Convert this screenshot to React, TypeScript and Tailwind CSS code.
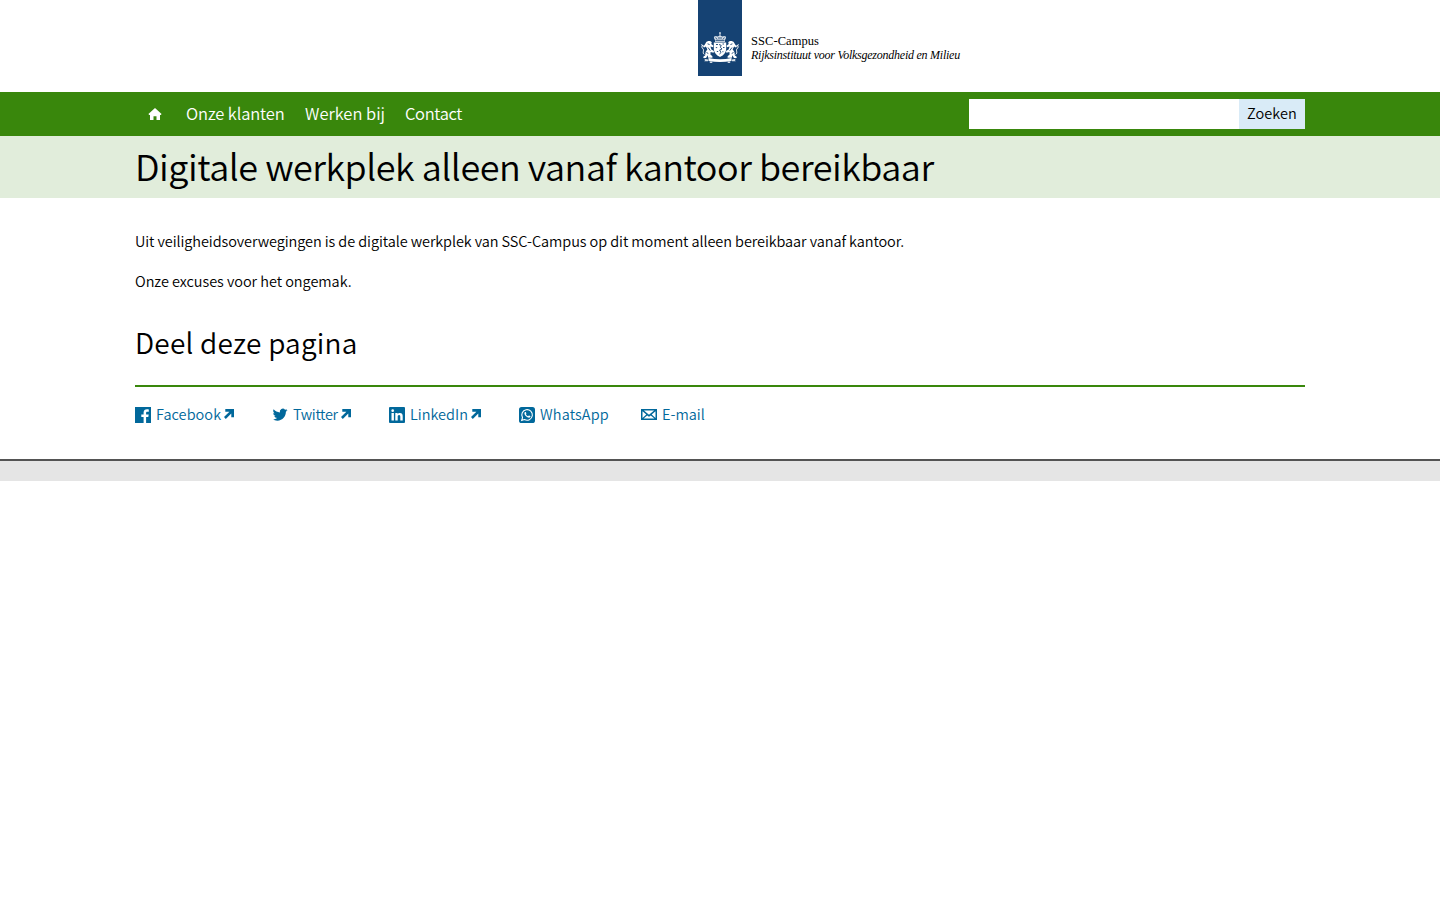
import type { ReactNode } from "react";

function Supporter() {
  return (
    <>
      <path d="M5 10.500c1-1.800 4.600-2.200 5.800 0l-.6 1.600 2.300 1.700-.5 1.500-2.600-.8 1 3 2.600 1.600-.4 1.700-3-.9-.2 2.700 2 1.600v1.500H7.200l-.6-2.500-1.500 2.700H2.300l.2-1.400 1.600-.9.500-3.500 1.800-2.800-1.600-2.800-1.600 1-1.200-.8 1.700-2z" />
      <path d="M3.400 22.500C.8 21 3.600 18.200 1.900 16.800.4 15.400.7 13.900 1.900 13.400M.2 12.700l2.400 1.100" fill="none" stroke="#fff" strokeWidth="1" />
      <path d="M6.600 11.800l2 .8M7 15.500l2.300 3.200M5.500 20.500l1.800 1" stroke="#154273" strokeWidth=".9" />
    </>
  );
}

function CoatOfArms() {
  return (
    <svg width="38" height="32" viewBox="0 0 38 32" fill="#fff" aria-hidden="true">
      <circle cx="19" cy="1" r=".9" opacity=".8" />
      <path d="M18.500 1.500h1v3h-1z" opacity=".8" />
      <path d="M13.200 4.600c1-.9 2.600-.9 3.400 0 .8-1.100 4-1.100 4.800 0 .8-.9 2.400-.9 3.400 0 .6.900.2 2-.8 3.400v1.900H14V8c-1-1.400-1.400-2.500-.8-3.400z" opacity=".8" />
      <path d="M14.600 5.500l1.600 2.200M23.400 5.500l-1.600 2.200M18 5v2.500M20 5v2.500M14.500 8.600h9" stroke="#154273" strokeWidth=".8" />
      <path d="M12.800 10.600h12.400v5.900c0 4.500-3 6.900-6.200 8.500-3.200-1.600-6.200-4-6.200-8.500z" />
      <path d="M15 12.500h2M21.500 12h1.500M14.800 15.600h1.400M22 15.500h1.500M15.800 19.500h1.400M21.400 19.700h1" stroke="#154273" strokeWidth=".9" />
      <path d="M18 12.500l2.200.8-.8 2 1.600 1.700-2.400 1 1.400 2.500-1.600 1.600" fill="none" stroke="#154273" strokeWidth=".9" />
      <Supporter />
      <g transform="translate(38 0) scale(-1 1)">
        <Supporter />
      </g>
      <path d="M7.500 25.900c7.500 1.700 15.500 1.700 23 0v3c-7.500 1.300-15.500 1.300-23 0z" />
      <path d="M3 26.800l4 .8v1.600H3.200l1-1.100zM35 26.800l-4 .8v1.600h3.800l-1-1.100z" opacity=".85" />
      <path d="M8.800 29.600h2.500V31H8.800zM26.700 29.600h2.500V31h-2.500z" opacity=".8" />
    </svg>
  );
}

function HomeIcon() {
  return (
    <svg className="-mt-px" width="14" height="12" viewBox="0 0 14 12" fill="#fff" aria-hidden="true">
      <path d="M7 0l6.600 6-.8.900H12V12H8.500V8.200h-3V12H2V6.900h-.8L.4 6z" />
    </svg>
  );
}

function FacebookIcon() {
  return (
    <svg width="16" height="16" viewBox="0 0 16 16" fill="#01689b" aria-hidden="true">
      <path d="M0 0h16v16h-4.900V9.900h2.200l.4-2.500h-2.600V5.900c0-.7.300-1.200 1.300-1.200h1.400V2.400c-.4-.1-1.100-.1-1.800-.1-2.100 0-3.400 1.200-3.400 3.300v1.800H6.300v2.500h2.300V16H0z" />
    </svg>
  );
}

function TwitterIcon() {
  return (
    <svg width="16" height="16" viewBox="-1 -0.500 26 26" fill="#01689b" aria-hidden="true">
      <path d="M23.950 4.570a10 10 0 0 1-2.820.770 4.960 4.960 0 0 0 2.160-2.720c-.950.550-2 .960-3.130 1.180a4.920 4.920 0 0 0-8.380 4.480C7.690 8.100 4.070 6.130 1.640 3.160a4.820 4.820 0 0 0-.670 2.480c0 1.710.870 3.210 2.190 4.100a4.900 4.900 0 0 1-2.230-.620v.060a4.920 4.920 0 0 0 3.950 4.830 5 5 0 0 1-2.210.080 4.940 4.940 0 0 0 4.600 3.420A9.870 9.870 0 0 1 0 19.540a13.990 13.990 0 0 0 7.550 2.210c9.050 0 14-7.500 14-13.980 0-.210 0-.420-.020-.630a9.940 9.940 0 0 0 2.460-2.550z" />
    </svg>
  );
}

function LinkedInIcon() {
  return (
    <svg width="16" height="16" viewBox="0 0 16 16" aria-hidden="true">
      <rect width="16" height="16" rx="1" fill="#01689b" />
      <circle cx="3.700" cy="3.700" r="1.350" fill="#fff" />
      <path d="M2.500 6.100h2.400v7.500H2.500zM6.300 6.100h2.300v1c.4-.7 1.200-1.200 2.300-1.200 2.300 0 2.800 1.500 2.800 3.500v4.200h-2.400V9.900c0-.9 0-2-1.200-2s-1.400 1-1.400 1.900v3.800H6.300z" fill="#fff" />
    </svg>
  );
}

function WhatsAppIcon() {
  return (
    <svg width="16" height="16" viewBox="0 0 16 16" aria-hidden="true">
      <rect width="16" height="16" rx="2.600" fill="#01689b" />
      <path d="M2.700 13.400l.8-2.800a5.300 5.300 0 1 1 2 1.950z" fill="none" stroke="#fff" strokeWidth="1.100" />
      <path d="M6.200 5c.3-.2.600-.1.700.2l.5 1.100c.1.400-.5.700-.5 1 .5.900 1.200 1.500 2.100 1.900.4.100.7-.8 1.100-.7l1.200.600c.3.200.1.900-.2 1.200-.6.600-1.500.6-2.700 0C6.900 9.500 5.900 8.400 5.500 7.100c-.3-.9.100-1.700.7-2.100z" fill="#fff" />
    </svg>
  );
}

function MailIcon() {
  return (
    <svg width="16" height="16" viewBox="0 0 16 16" aria-hidden="true">
      <rect y="2" width="16" height="11" fill="#01689b" />
      <path d="M1.500 4.300v6.700l3.800-3.500zM14.500 4.300v6.700l-3.800-3.500zM2.900 3.500h10.200L8 7.700zM2.600 11.600l3.600-3.200L8 9.800l1.800-1.400 3.600 3.200z" fill="#fff" />
    </svg>
  );
}

function ExternalIcon() {
  return (
    <svg className="-mt-[2px] ml-[3px]" width="10" height="10" viewBox="0 0 10 10" fill="#01689b" aria-hidden="true">
      <path d="M1.300 0H10v8.300H7.300V4.500L1.800 9.900 0 8.100l5.400-5.400H1.300z" />
    </svg>
  );
}

function ShareLink({ icon, label, className, external = false }: { icon: ReactNode; label: string; className: string; external?: boolean }) {
  return (
    <li className={className}>
      <a href="#" className="flex h-5 items-center">
        {icon}
        <span className="-mt-[2px] ml-[5px] whitespace-nowrap">{label}</span>
        {external && <ExternalIcon />}
      </a>
    </li>
  );
}

export default function App() {
  return (
    <div className="min-h-screen bg-white font-['Noto_Sans_CJK_JP','Noto_Sans',sans-serif] text-[14.500px] font-[350] text-black">
      <header className="flex h-[92px] pl-[698px]">
        <div className="flex h-[76px] w-11 justify-center bg-[#154273] pt-8">
          <CoatOfArms />
        </div>
        <div className="ml-[9px] pt-[34px] font-['Liberation_Serif',serif] leading-[14px] font-normal whitespace-nowrap">
          <p className="text-[12.500px] tracking-[0.060px]">SSC-Campus</p>
          <p className="text-[12px] tracking-[-0.245px] italic">Rijksinstituut voor Volksgezondheid en Milieu</p>
        </div>
      </header>

      <nav className="h-11 bg-[#39870c]">
        <div className="mx-auto flex h-full w-[1170px] items-center text-[16.500px] text-white">
          <a href="#" className="ml-[13px] w-[38px]" aria-label="Home">
            <HomeIcon />
          </a>
          <a href="#" className="w-[119px] pb-[2px] tracking-[-0.120px] whitespace-nowrap">Onze klanten</a>
          <a href="#" className="w-[100px] pb-[2px] whitespace-nowrap">Werken bij</a>
          <a href="#" className="pb-[2px] tracking-[-0.350px]">Contact</a>
          <form className="ml-auto flex h-[30px]">
            <input className="w-[270px] bg-white px-2 text-black outline-none" aria-label="Zoeken" />
            <button type="button" className="w-[66px] bg-[#d9ebf7] pb-[2px] text-[14.500px] leading-[28px] tracking-[0.100px] text-black">Zoeken</button>
          </form>
        </div>
      </nav>

      <div className="h-[62px] bg-[#e1eddb]">
        <h1 className="mx-auto w-[1170px] text-[36px] leading-[59px] font-[350] tracking-[-0.475px]">
          Digitale werkplek alleen vanaf kantoor bereikbaar
        </h1>
      </div>

      <main className="mx-auto h-[261px] w-[1170px] pt-[33px]">
        <p className="leading-5 tracking-[-0.080px]">
          Uit veiligheidsoverwegingen is de digitale werkplek van SSC-Campus op dit moment alleen bereikbaar vanaf kantoor.
        </p>
        <p className="mt-5 leading-5 tracking-[-0.050px]">Onze excuses voor het ongemak.</p>
        <h2 className="mt-[31px] text-[28px] leading-[40px] font-[350] tracking-[0.220px]">Deel deze pagina</h2>
        <ul className="mt-[23px] flex border-t-2 border-[#39870c] pt-[18px] text-[#01689b]">
          <ShareLink className="w-[137px] tracking-[0.050px]" icon={<FacebookIcon />} label="Facebook" external />
          <ShareLink className="w-[117px] tracking-[-0.350px]" icon={<TwitterIcon />} label="Twitter" external />
          <ShareLink className="w-[130px] tracking-[0.020px]" icon={<LinkedInIcon />} label="LinkedIn" external />
          <ShareLink className="w-[122px] tracking-[0.130px]" icon={<WhatsAppIcon />} label="WhatsApp" />
          <ShareLink className="w-[70px]" icon={<MailIcon />} label="E-mail" />
        </ul>
      </main>

      <footer className="h-[22px] border-t-2 border-[#535353] bg-[#e5e5e5]" />
    </div>
  );
}
